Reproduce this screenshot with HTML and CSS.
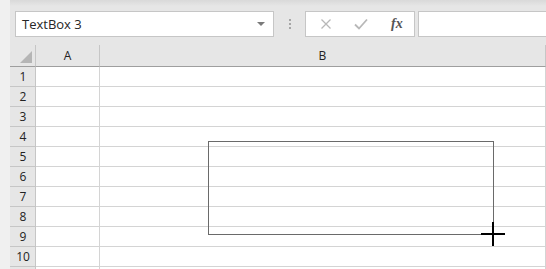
FILE: index.html
```html
<!DOCTYPE html>
<html lang="en">
<head>
    <meta charset="UTF-8">
    <link rel="stylesheet" href="styles.css">
    <title>Sheet</title>
</head>
<body>
<div class="window">
    <div class="strip"></div>

    <div class="main">
        <!-- barra de formulas -->
        <div class="toolbar">
            <div class="namebox">
                <span>TextBox 3</span>
                <span class="arrow"></span>
            </div>
            <div class="dots"><i></i><i></i><i></i></div>
            <div class="buttons">
                <svg width="12" height="12" viewBox="0 0 12 12"><path d="M1.5 1.5 L10.5 10.5 M10.5 1.5 L1.5 10.5" stroke="#b8b8b8" stroke-width="1.3" fill="none"/></svg>
                <svg width="14" height="12" viewBox="0 0 14 12"><path d="M1 6.5 L5 10.5 L13 1.5" stroke="#b8b8b8" stroke-width="1.8" fill="none"/></svg>
                <span class="fx">fx</span>
            </div>
            <div class="formula"></div>
        </div>

        <div class="sheet">
            <div class="grid">
                <div class="corner"><span class="tri"></span></div>
                <div class="colhead">A</div>
                <div class="colhead">B</div>

                <div class="rowhead">1</div><div class="cell"></div><div class="cell"></div>
                <div class="rowhead">2</div><div class="cell"></div><div class="cell"></div>
                <div class="rowhead">3</div><div class="cell"></div><div class="cell"></div>
                <div class="rowhead">4</div><div class="cell"></div><div class="cell"></div>
                <div class="rowhead">5</div><div class="cell"></div><div class="cell"></div>
                <div class="rowhead">6</div><div class="cell"></div><div class="cell"></div>
                <div class="rowhead">7</div><div class="cell"></div><div class="cell"></div>
                <div class="rowhead">8</div><div class="cell"></div><div class="cell"></div>
                <div class="rowhead">9</div><div class="cell"></div><div class="cell"></div>
                <div class="rowhead">10</div><div class="cell"></div><div class="cell"></div>
                <div class="rowhead"></div><div class="cell"></div><div class="cell"></div>
            </div>

            <!-- caixa de texto desenhada por cima das celulas -->
            <div class="textbox"></div>
            <div class="cross"></div>
        </div>
    </div>
</div>
</body>
</html>
```

FILE: styles.css
```css
* {
    box-sizing: border-box;
}

body {
    margin: 0;
    width: 546px;
    height: 269px;
    overflow: hidden;
    background: #f0f0f0;
    font-family: "Open Sans", "Liberation Sans", sans-serif;
}

.window {
    display: flex;
    height: 269px;
    overflow: hidden;
}

.strip {
    width: 10px;
    flex-shrink: 0;
    background: #f0f0f0;
}

.main {
    flex: 1;
    display: flex;
    flex-direction: column;
    background: #e6e6e6;
    min-width: 0;
}

.toolbar {
    height: 45px;
    flex-shrink: 0;
    display: flex;
    align-items: flex-start;
    padding: 11px 0 0 5px;
    background: linear-gradient(#d9d9d9, #e6e6e6 6px);
}

.namebox {
    width: 259px;
    height: 26px;
    background: white;
    border: 1px solid #c6c6c6;
    display: flex;
    align-items: center;
    justify-content: space-between;
    padding: 0 8px 0 6px;
    font-size: 13px;
    color: #262626;
}

.arrow {
    width: 0;
    height: 0;
    border-left: 4px solid transparent;
    border-right: 4px solid transparent;
    border-top: 4px solid #7a7a7a;
}

.dots {
    width: 31px;
    height: 26px;
    display: flex;
    flex-direction: column;
    align-items: center;
    justify-content: center;
    gap: 2px;
}

.dots i {
    width: 2px;
    height: 2px;
    background: #a6a6a6;
}

.buttons {
    width: 110px;
    height: 26px;
    background: white;
    border: 1px solid #c6c6c6;
    display: flex;
    align-items: center;
    padding-left: 14px;
    gap: 22px;
}

.fx {
    font-family: "Liberation Serif", serif;
    font-style: italic;
    font-weight: bold;
    font-size: 14px;
    color: #555;
    margin-left: 1px;
}

.formula {
    flex: 1;
    height: 26px;
    margin-left: 3px;
    background: white;
    border: 1px solid #c6c6c6;
    border-right: none;
}

.sheet {
    position: relative;
    flex: 1;
    min-height: 0;
}

.grid {
    display: grid;
    grid-template-columns: 26px 64px 1fr;
    grid-template-rows: 22px repeat(11, 20px);
    background: white;
}

.corner,
.colhead,
.rowhead {
    background: #e6e6e6;
    color: #222;
}

.corner {
    position: relative;
    border-right: 1px solid #c6c6c6;
    border-bottom: 1px solid #9e9e9e;
}

.tri {
    position: absolute;
    left: 10px;
    top: 6px;
    width: 0;
    height: 0;
    border-left: 12px solid transparent;
    border-bottom: 12px solid #b5b5b5;
}

.colhead {
    border-right: 1px solid #c6c6c6;
    border-bottom: 1px solid #9e9e9e;
    text-align: center;
    font-size: 12px;
    line-height: 21px;
}

.rowhead {
    border-right: 1px solid #c6c6c6;
    border-bottom: 1px solid #c6c6c6;
    text-align: center;
    font-size: 12px;
    line-height: 19px;
    padding-left: 1px;
}

.cell {
    border-right: 1px solid #d4d4d4;
    border-bottom: 1px solid #d4d4d4;
}

.textbox {
    position: absolute;
    left: 198px;
    top: 96px;
    width: 286px;
    height: 94px;
    border: 1px solid #6a6a6a;
    background: transparent;
}

.cross {
    position: absolute;
    left: 471px;
    top: 177px;
    width: 24px;
    height: 24px;
}

.cross::before,
.cross::after {
    content: "";
    position: absolute;
    background: #000;
}

.cross::before {
    left: 0;
    top: 11px;
    width: 24px;
    height: 2px;
}

.cross::after {
    left: 11px;
    top: 0;
    width: 2px;
    height: 24px;
}
```
